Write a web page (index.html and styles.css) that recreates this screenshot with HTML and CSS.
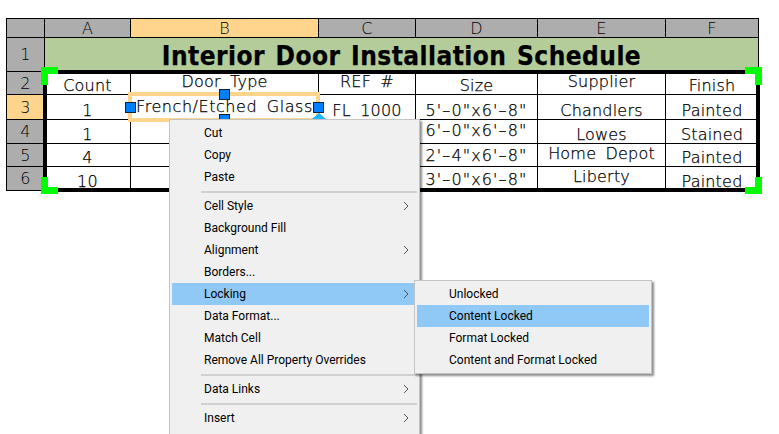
FILE: index.html
```html
<!DOCTYPE html>
<html lang="en">
<head>
<meta charset="utf-8">
<title>Interior Door Installation Schedule</title>
<link rel="stylesheet" href="styles.css">
</head>
<body>
<div class="stage">
  <div class="sheet">
    <div class="cell head corner"></div>
    <div class="cell head">A</div>
    <div class="cell head active">B</div>
    <div class="cell head">C</div>
    <div class="cell head">D</div>
    <div class="cell head">E</div>
    <div class="cell head">F</div>

    <div class="cell head">1</div>
    <div class="cell title">Interior Door Installation Schedule</div>

    <div class="cell head">2</div>
    <div class="cell low">Count</div>
    <div class="cell top">Door Type</div>
    <div class="cell top">REF #</div>
    <div class="cell low">Size</div>
    <div class="cell top">Supplier</div>
    <div class="cell low">Finish</div>

    <div class="cell head active">3</div>
    <div class="cell low">1</div>
    <div class="cell top wide">French/Etched Glass</div>
    <div class="cell low">FL 1000</div>
    <div class="cell low dim">5'–0"x6'–8"</div>
    <div class="cell low">Chandlers</div>
    <div class="cell low">Painted</div>

    <div class="cell head">4</div>
    <div class="cell low">1</div>
    <div class="cell"></div>
    <div class="cell"></div>
    <div class="cell top dim">6'–0"x6'–8"</div>
    <div class="cell low">Lowes</div>
    <div class="cell low">Stained</div>

    <div class="cell head">5</div>
    <div class="cell low">4</div>
    <div class="cell"></div>
    <div class="cell"></div>
    <div class="cell dim">2'–4"x6'–8"</div>
    <div class="cell top">Home Depot</div>
    <div class="cell low">Painted</div>

    <div class="cell head">6</div>
    <div class="cell low">10</div>
    <div class="cell"></div>
    <div class="cell"></div>
    <div class="cell dim">3'–0"x6'–8"</div>
    <div class="cell top">Liberty</div>
    <div class="cell low">Painted</div>
  </div>

  <div class="frame"></div>
  <div class="grip grip-tl"></div>
  <div class="grip grip-tr"></div>
  <div class="grip grip-bl"></div>
  <div class="grip grip-br"></div>

  <div class="selection"></div>
  <div class="handle handle-l"></div>
  <div class="handle handle-r"></div>
  <div class="handle handle-t"></div>
  <div class="handle handle-b"></div>
  <div class="fill-arrow"></div>

  <div class="menu main-menu">
    <div class="item">Cut</div>
    <div class="item">Copy</div>
    <div class="item">Paste</div>
    <div class="sep"></div>
    <div class="item">Cell Style<svg class="chev" viewBox="0 0 6 10"><path d="M1 1l4 4-4 4"/></svg></div>
    <div class="item">Background Fill</div>
    <div class="item">Alignment<svg class="chev" viewBox="0 0 6 10"><path d="M1 1l4 4-4 4"/></svg></div>
    <div class="item">Borders...</div>
    <div class="item hot">Locking<svg class="chev" viewBox="0 0 6 10"><path d="M1 1l4 4-4 4"/></svg></div>
    <div class="item">Data Format...</div>
    <div class="item">Match Cell</div>
    <div class="item">Remove All Property Overrides</div>
    <div class="sep"></div>
    <div class="item">Data Links<svg class="chev" viewBox="0 0 6 10"><path d="M1 1l4 4-4 4"/></svg></div>
    <div class="sep"></div>
    <div class="item">Insert<svg class="chev" viewBox="0 0 6 10"><path d="M1 1l4 4-4 4"/></svg></div>
  </div>

  <div class="menu sub-menu">
    <div class="item">Unlocked</div>
    <div class="item hot">Content Locked</div>
    <div class="item">Format Locked</div>
    <div class="item">Content and Format Locked</div>
  </div>
</div>
</body>
</html>
```
FILE: styles.css
```css
* { box-sizing: border-box; }
html, body { margin: 0; padding: 0; background: #fff; }
.stage {
  position: relative;
  width: 779px;
  height: 434px;
  overflow: hidden;
  padding: 18px 0 0 6px;
}
.sheet {
  display: grid;
  grid-template-columns: 37px 85px 187px 96px 121px 127px 92px;
  grid-template-rows: 18px 33px 22px 24px 23px 22px 23px;
  gap: 1px;
  width: 753px;
  height: 173px;
  padding: 1px;
  background: #000;
  font-family: "DejaVu Sans", sans-serif;
  font-weight: 200;
  font-size: 16px;
  letter-spacing: 0.2px;
  word-spacing: 4px;
  color: #000;
  -webkit-text-stroke: 0.25px #000;
}
.cell {
  display: flex;
  align-items: center;
  justify-content: center;
  background: #fff;
  white-space: nowrap;
  overflow: hidden;
}
.head { background: #adadad; font-size: 16px; -webkit-text-stroke: 0; }
.active { background: #ffd48c; }
.top { align-items: flex-start; }
.low { align-items: flex-end; line-height: 17px; }
.wide { letter-spacing: 0.55px; padding-top: 2px; }
.dim { letter-spacing: 1.1px; padding-top: 1px; }
.title {
  grid-column: span 6;
  background: #b3cc99;
  font-family: "DejaVu Sans", sans-serif;
  font-weight: 700;
  font-stretch: condensed;
  font-size: 26px;
  letter-spacing: 0.45px;
  word-spacing: 2px;
  padding-top: 2px;
}
.frame {
  position: absolute;
  left: 43px;
  top: 70px;
  width: 717px;
  height: 122px;
  border: 4px solid #000;
  pointer-events: none;
}
.grip { position: absolute; width: 17px; height: 18px; }
.grip-tl { left: 41px; top: 67px; background: linear-gradient(#0f0,#0f0) 0 0/17px 7px no-repeat, linear-gradient(#0f0,#0f0) 0 0/7px 18px no-repeat; }
.grip-tr { left: 745px; top: 67px; background: linear-gradient(#0f0,#0f0) 0 0/17px 7px no-repeat, linear-gradient(#0f0,#0f0) 100% 0/7px 18px no-repeat; }
.grip-bl { left: 41px; top: 177px; height: 17px; background: linear-gradient(#0f0,#0f0) 0 100%/17px 7px no-repeat, linear-gradient(#0f0,#0f0) 0 0/7px 17px no-repeat; }
.grip-br { left: 745px; top: 177px; height: 17px; background: linear-gradient(#0f0,#0f0) 0 100%/17px 7px no-repeat, linear-gradient(#0f0,#0f0) 100% 0/7px 17px no-repeat; }
.selection {
  position: absolute;
  left: 128px;
  top: 92px;
  width: 192px;
  height: 30px;
  border: 4px solid #ffd48c;
}
.handle {
  position: absolute;
  width: 11px;
  height: 11px;
  background: #007fff;
  border: 1px solid #123;
}
.handle-l { left: 125px; top: 102px; }
.handle-r { left: 313px; top: 102px; }
.handle-t { left: 219px; top: 89px; }
.handle-b { left: 219px; top: 114px; }
.fill-arrow {
  position: absolute;
  left: 312px;
  top: 113px;
  width: 0;
  height: 0;
  border-left: 7px solid transparent;
  border-right: 7px solid transparent;
  border-bottom: 6px solid #19b5ff;
}
.menu {
  position: absolute;
  background: #f0f0f0;
  border: 1px solid #c4c4c4;
  padding: 2px;
  font-family: Roboto, sans-serif;
  font-size: 12px;
  color: #000;
  box-shadow: 2px 2px 2px rgba(0,0,0,.45);
}
.main-menu { left: 169px; top: 119px; width: 251px; height: 330px; }
.sub-menu { left: 414px; top: 280px; width: 238px; height: 94px; }
.item {
  position: relative;
  display: flex;
  align-items: center;
  height: 22px;
  padding-left: 32px;
  white-space: nowrap;
}
.hot { background: #90c8f6; }
.sep { height: 2px; margin: 3px 0 2px 29px; background: #d0d0d0; }
.chev {
  position: absolute;
  left: 231px;
  top: 6px;
  width: 6px;
  height: 10px;
  fill: none;
  stroke: #555;
  stroke-width: 1;
}
```
